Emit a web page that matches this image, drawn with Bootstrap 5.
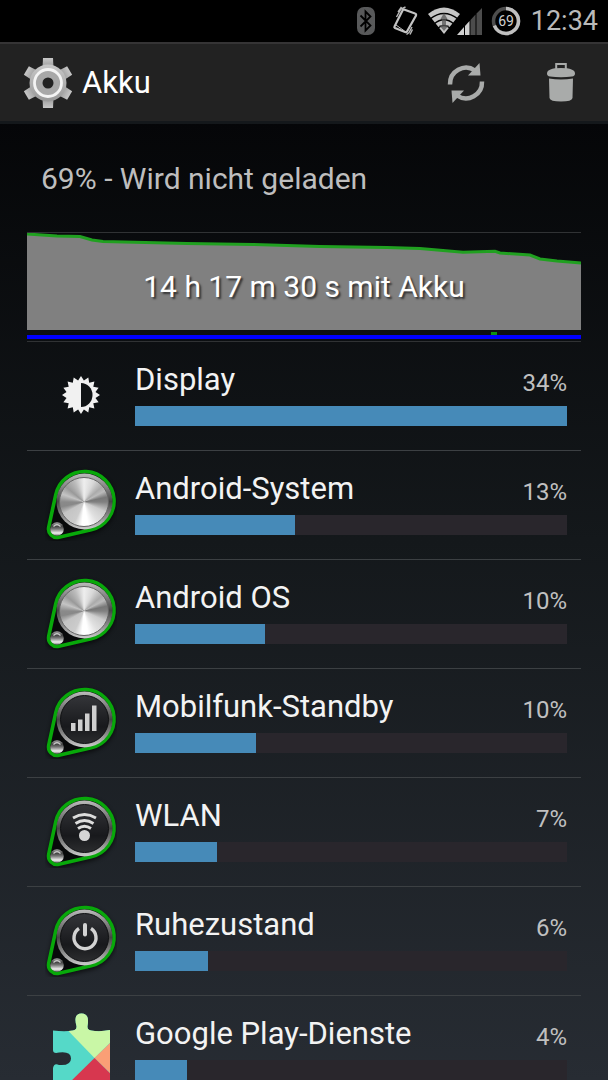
<!DOCTYPE html>
<html lang="de" data-bs-theme="dark">
<head>
<meta charset="utf-8">
<meta name="viewport" content="width=device-width, initial-scale=1">
<title>Akku</title>
<link href="https://cdn.jsdelivr.net/npm/bootstrap@5.3.0/dist/css/bootstrap.min.css" rel="stylesheet">
<style>
body { font-family: Roboto, "Noto Sans", sans-serif; color: #f3f3f3; background: linear-gradient(#000 0, #050608 123px, #14181b 50%, #272c33 100%); }
svg { display: block; flex: none; }
.statusbar { height: 42px; background: #000; padding-right: 10px; }
.clock { font-size: 27px; line-height: 42px; color: #bababa; margin-left: 10px; }
.appbar { height: 82px; background: #222; border-top: 2px solid #353435; border-bottom: 3px solid #14181b; padding: 0 33px 0 23px; }
.appbar h1 { font-size: 31px; line-height: 36px; font-weight: 400; margin-left: 9px; }
.actions { gap: 61px; }
.content-pane { padding: 0 27px; scrollbar-width: none; }
.state { font-size: 30px; line-height: 36px; color: #bebebe; padding: 37px 14px 35px; }
.history { display: grid; border-top: 1px solid #303234; border-bottom: 1px solid #303234; color: #fff; text-decoration: none; }
.history > * { grid-area: 1 / 1; }
.history span { font-size: 30px; line-height: 36px; padding-top: 36px; text-shadow: 2px 2px 2px #333; }
.usage { --bs-list-group-bg: transparent; --bs-list-group-border-color: #3c4043; }
.usage .list-group-item { padding: 0 14px 0 0; color: #f3f3f3; border-width: 0 0 1px; }
.icon-cell { width: 108px; padding: 16px 0 0 18px; }
.entry { padding: 20px 0 24px; }
.entry-name { font-size: 31px; line-height: 36px; }
.entry-share { font-size: 24px; line-height: 42px; height: 36px; color: #c0c0c0; }
.usage .progress { --bs-progress-height: 20px; --bs-progress-bg: #29262c; --bs-progress-bar-bg: #468ab8; --bs-progress-border-radius: 0; margin-top: 8px; }
.brushed { width: 50px; height: 50px; border-radius: 50%; border: 1px solid #666; background: conic-gradient(#eee, #d8d8d8 25deg, #aaa 50deg, #bbb 62deg, #777 78deg, #808080 90deg, #ccc 115deg, #e0e0e0 145deg, #fff 170deg, #fff 185deg, #ccc 205deg, #c4c4c4 240deg, #888 258deg, #8a8a8a 270deg, #c4c4c4 290deg, #999 310deg, #bbb 335deg, #eee); }
</style>
</head>
<body>
<svg width="0" height="0" class="position-absolute" aria-hidden="true">
  <defs>
    <linearGradient id="rimV" x1="0" y1="0" x2="0" y2="1">
      <stop offset="0" stop-color="#bbb"/><stop offset=".3" stop-color="#777"/><stop offset=".5" stop-color="#454545"/><stop offset=".75" stop-color="#888"/><stop offset="1" stop-color="#ccc"/>
    </linearGradient>
    <linearGradient id="face" x1="0" y1="0" x2="0" y2="1"><stop offset="0" stop-color="#343539"/><stop offset=".65" stop-color="#18191c"/><stop offset="1" stop-color="#2c2d2f"/></linearGradient>
    <linearGradient id="ball" x1="0" y1="0" x2="0" y2="1"><stop offset="0" stop-color="#aaa"/><stop offset=".3" stop-color="#444"/><stop offset=".5" stop-color="#777"/><stop offset=".8" stop-color="#f0f0f0"/><stop offset="1" stop-color="#777"/></linearGradient>
    <linearGradient id="steel" x1="0" y1="0" x2="0" y2="1"><stop offset="0" stop-color="#c8c8c8"/><stop offset="1" stop-color="#999"/></linearGradient>
    <filter id="soft" x="-20%" y="-20%" width="140%" height="140%"><feGaussianBlur stdDeviation="2"/></filter>
    <g id="knob">
      <path d="M10.700 29.800A29.500 29.500 0 1 1 46.200 64.700L13.900 72.300A8.500 8.500 0 0 1 3.700 62.200Z" fill="#000" stroke="#000" stroke-width="4" opacity=".6" filter="url(#soft)"/>
      <circle cx="39.500" cy="34.500" r="28.800" fill="url(#rimV)"/>
      <path d="M10.700 27.800A29.500 29.500 0 1 1 46.200 62.700L13.900 70.300A8.500 8.500 0 0 1 3.700 60.200Z" fill="#08090a" stroke="#08a80a" stroke-width="3.600"/>
      <circle cx="39.500" cy="34.500" r="28" fill="url(#rimV)"/>
      <circle cx="12" cy="62" r="6.800" fill="url(#ball)"/>
      <path d="M8.500 59.500Q12 56 15.500 59.500" fill="none" stroke="#ccc" stroke-width="1.200"/>
    </g>
    <g id="knobDark">
      <use href="#knob"/>
      <circle cx="39.500" cy="34.500" r="24" fill="url(#face)" stroke="#101113" stroke-width="1"/>
    </g>
  </defs>
</svg>

<div class="vh-100 d-flex flex-column overflow-hidden">
  <div class="statusbar d-flex align-items-center justify-content-end flex-shrink-0">
    <svg width="18" height="28" viewBox="0 0 18 28" role="img" aria-label="Bluetooth"><rect width="18" height="28" rx="7" fill="#58595a"/><path d="M3.500 8.500 13.500 18.500 8.500 23.500V4.500L13.500 9.500 3.500 19.500" fill="none" stroke="#000" stroke-width="1.800"/></svg>
    <svg class="ms-3" width="28" height="30" viewBox="0 0 28 30" role="img" aria-label="Vibration"><path d="M13 3.500 24 7.500Q25.500 8 25 9.500L16 25.500Q15.500 26.500 14 26L4 22Q3 21.500 3.500 20.500L11.500 4.500Q12 3.200 13 3.500Z" fill="none" stroke="#c4c4c4" stroke-width="2.200"/><path d="M5 19 13.500 25" stroke="#c4c4c4" stroke-width="1"/><path d="M14.500 1 10 3 5.500 11M10.500 1 7 6M15.500 28.500 18 26.500 21 21M19 28.500 21.500 23.500" fill="none" stroke="#b9b9b9" stroke-width="1.400"/></svg>
    <svg class="ms-2" width="56" height="28" viewBox="0 0 56 28" role="img" aria-label="WLAN und Mobilfunk">
      <path d="M1 7Q17 -6 33 7L17 27Z" fill="#c6c6c6"/>
      <path d="M3 12Q17 1 31 12M7 17Q17 8.500 27 17M11 21Q17 16 23 21" fill="none" stroke="#000" stroke-width="1.500"/>
      <path d="M17 6 20.500 12H19V18H22L17 24 12 18H15V12H13.500Z" fill="#555" opacity=".75"/>
      <path d="M30 28 37 20V28Z" fill="#d0d0d0"/><path d="M38 19 42.500 14V28H38Z" fill="#d0d0d0"/>
      <path d="M43.500 13 48.500 7.500V28H43.500ZM49.500 6.500 55 1V28H49.500Z" fill="#4c4c4c"/>
    </svg>
    <svg class="ms-2" width="30" height="30" viewBox="0 0 30 30" role="img" aria-label="Akku 69 Prozent"><circle cx="15" cy="15" r="12.500" fill="none" stroke="#4d4d4d" stroke-width="3.500"/><circle cx="15" cy="15" r="12.500" fill="none" stroke="#c0c0c0" stroke-width="3.500" pathLength="100" stroke-dasharray="69 31" transform="rotate(-90 15 15)"/><text x="15" y="20" text-anchor="middle" font-size="14" fill="#d0d0d0">69</text></svg>
    <time class="clock">12:34</time>
  </div>

  <header class="appbar d-flex align-items-center flex-shrink-0">
    <svg width="50" height="52" viewBox="-25 -26 50 52" aria-hidden="true">
      <g fill="url(#steel)"><path id="tooth" d="M-5-25H5L5.500-15H-5.500Z"/><use href="#tooth" transform="rotate(60)"/><use href="#tooth" transform="rotate(120)"/><use href="#tooth" transform="rotate(180)"/><use href="#tooth" transform="rotate(240)"/><use href="#tooth" transform="rotate(300)"/></g>
      <circle r="18.500" fill="url(#steel)"/><circle r="13.500" fill="#a8a8a8" stroke="#f4f4f4" stroke-width="2.800"/><circle r="5.500" fill="#222"/>
    </svg>
    <h1 class="mb-0 me-auto">Akku</h1>
    <div class="actions d-flex align-items-center">
      <button type="button" class="btn p-0 border-0" aria-label="Aktualisieren"><svg width="40" height="42" viewBox="0 0 40 42"><g id="arc"><path d="M4 22.500A16 16.200 0 0 1 29 8.500" fill="none" stroke="#a9abaa" stroke-width="4.500"/><path d="M33.500 1 34.500 13.500 22 13.500Z" fill="#a9abaa"/></g><use href="#arc" transform="rotate(180 20 21)"/></svg></button>
      <button type="button" class="btn p-0 border-0" aria-label="Löschen"><svg width="28" height="42" viewBox="0 0 28 42"><path d="M9.200 7V2H18.800V7" fill="none" stroke="#a9abaa" stroke-width="2"/><path d="M0 11.500Q0 6 14 6T28 11.500Q28 14 25 14.500Q14 16 3 14.500Q0 14 0 11.500ZM2 16.500Q14 18.500 26 16.500L25.500 36Q25 39.500 14 39.500T2.500 36Z" fill="#a9abaa"/></svg></button>
    </div>
  </header>

  <main class="content-pane flex-grow-1 overflow-auto">
    <div class="state">69% - Wird nicht geladen</div>
    <a href="#verlauf" class="history" id="verlauf">
      <svg class="w-100" height="108" viewBox="0 0 554 108" preserveAspectRatio="none" aria-hidden="true">
        <path d="M0 1 30 3 53 3.500 65 7 76 8.500 160 10.500 226 11.500 293 13.500 360 14.500 393 15.500 416 17.500 436 19.300 468 18.300 473 20 503 22 513 26 530 28 554 30V97H0Z" fill="#808080"/>
        <path d="M0 1 30 3 53 3.500 65 7 76 8.500 160 10.500 226 11.500 293 13.500 360 14.500 393 15.500 416 17.500 436 19.300 468 18.300 473 20 503 22 513 26 530 28 554 30" fill="none" stroke="#20a020" stroke-width="3"/>
        <path d="M464 99H470V102H464Z" fill="#109010"/><path d="M0 102H554V106H0Z" fill="#00f"/>
      </svg>
      <span class="text-center">14 h 17 m 30 s mit Akku</span>
    </a>

    <ul class="usage list-group list-group-flush">
      <li class="list-group-item d-flex">
        <div class="icon-cell"><svg width="72" height="74" viewBox="0 0 72 74" aria-hidden="true"><g transform="translate(36 37)"><path d="M0-19 2.900-14.500 7.300-17.600 8.200-12.300 13.400-13.400 12.300-8.200 17.600-7.300 14.500-2.900 19 0 14.500 2.900 17.600 7.300 12.300 8.200 13.400 13.400 8.200 12.300 7.300 17.600 2.900 14.500 0 19-2.900 14.500-7.300 17.600-8.200 12.300-13.400 13.400-12.300 8.200-17.600 7.300-14.500 2.900-19 0-14.500-2.900-17.600-7.300-12.300-8.200-13.400-13.400-8.200-12.300-7.300-17.600-2.900-14.500Z" fill="#f1f1f1"/><path d="M0-12A11.500 12 0 0 1 0 12Z" fill="#101315"/></g></svg></div>
        <div class="entry flex-grow-1"><div class="d-flex justify-content-between"><span class="entry-name">Display</span><span class="entry-share">34%</span></div><div class="progress" role="progressbar" aria-label="Display" aria-valuenow="100"><div class="progress-bar" style="width:100%"></div></div></div>
      </li>
      <li class="list-group-item d-flex">
        <div class="icon-cell"><svg width="72" height="74" viewBox="0 0 72 74" aria-hidden="true"><use href="#knob"/><foreignObject x="14" y="10" width="52" height="52"><div class="brushed"></div></foreignObject></svg></div>
        <div class="entry flex-grow-1"><div class="d-flex justify-content-between"><span class="entry-name">Android-System</span><span class="entry-share">13%</span></div><div class="progress" role="progressbar" aria-label="Android-System" aria-valuenow="37"><div class="progress-bar" style="width:37%"></div></div></div>
      </li>
      <li class="list-group-item d-flex">
        <div class="icon-cell"><svg width="72" height="74" viewBox="0 0 72 74" aria-hidden="true"><use href="#knob"/><foreignObject x="14" y="10" width="52" height="52"><div class="brushed"></div></foreignObject></svg></div>
        <div class="entry flex-grow-1"><div class="d-flex justify-content-between"><span class="entry-name">Android OS</span><span class="entry-share">10%</span></div><div class="progress" role="progressbar" aria-label="Android OS" aria-valuenow="30"><div class="progress-bar" style="width:30%"></div></div></div>
      </li>
      <li class="list-group-item d-flex">
        <div class="icon-cell"><svg width="72" height="74" viewBox="0 0 72 74" aria-hidden="true"><use href="#knobDark"/><path d="M26 38H30.500V46H26ZM33 34.500H37.500V46H33ZM40 28.500H44.500V46H40ZM47 20.500H51.500V46H47Z" fill="#cfcfcf"/></svg></div>
        <div class="entry flex-grow-1"><div class="d-flex justify-content-between"><span class="entry-name">Mobilfunk-Standby</span><span class="entry-share">10%</span></div><div class="progress" role="progressbar" aria-label="Mobilfunk-Standby" aria-valuenow="28"><div class="progress-bar" style="width:28%"></div></div></div>
      </li>
      <li class="list-group-item d-flex">
        <div class="icon-cell"><svg width="72" height="74" viewBox="0 0 72 74" aria-hidden="true"><use href="#knobDark"/><path d="M28 24Q39.500 17 51 24M30.500 29.500Q39.500 23.500 48.500 29.500M33 34.500Q39.500 30 46 34.500" fill="none" stroke="#ddd" stroke-width="2.800"/><circle cx="39.500" cy="41.500" r="5.500" fill="#d5d5d5"/></svg></div>
        <div class="entry flex-grow-1"><div class="d-flex justify-content-between"><span class="entry-name">WLAN</span><span class="entry-share">7%</span></div><div class="progress" role="progressbar" aria-label="WLAN" aria-valuenow="19"><div class="progress-bar" style="width:19%"></div></div></div>
      </li>
      <li class="list-group-item d-flex">
        <div class="icon-cell"><svg width="72" height="74" viewBox="0 0 72 74" aria-hidden="true"><use href="#knobDark"/><path d="M34 25.500A11 11 0 1 0 46 25.500" fill="none" stroke="#d2d2d2" stroke-width="3.400"/><path d="M40 22V31.500" stroke="#d2d2d2" stroke-width="4" stroke-linecap="round"/></svg></div>
        <div class="entry flex-grow-1"><div class="d-flex justify-content-between"><span class="entry-name">Ruhezustand</span><span class="entry-share">6%</span></div><div class="progress" role="progressbar" aria-label="Ruhezustand" aria-valuenow="17"><div class="progress-bar" style="width:17%"></div></div></div>
      </li>
      <li class="list-group-item d-flex">
        <div class="icon-cell"><svg width="72" height="74" viewBox="0 0 72 74" aria-hidden="true">
          <clipPath id="piece"><path d="M8 18.500Q20 20 28 18.500Q32 18 31.500 14Q28 1.500 36.500 1.500T42.500 14Q42 18 46 18.500Q55 20 65 18V74H8V56Q9 50.500 14 53Q26 54 26 46.500T14 40.500Q8 42 8 38Z"/></clipPath>
          <g clip-path="url(#piece)"><path d="M0 0H72V74H0Z" fill="#55d9c8"/><path d="M7 2V0H72V24L49.500 46Z" fill="#c9f7a6"/><path d="M49.500 46 66 30V62Z" fill="#fa9f76"/><path d="M49.500 46 78 74H21Z" fill="#d7374f"/></g></svg></div>
        <div class="entry flex-grow-1"><div class="d-flex justify-content-between"><span class="entry-name">Google Play-Dienste</span><span class="entry-share">4%</span></div><div class="progress" role="progressbar" aria-label="Google Play-Dienste" aria-valuenow="12"><div class="progress-bar" style="width:12%"></div></div></div>
      </li>
    </ul>
  </main>
</div>
<script src="https://cdn.jsdelivr.net/npm/bootstrap@5.3.0/dist/js/bootstrap.bundle.min.js"></script>
</body>
</html>
